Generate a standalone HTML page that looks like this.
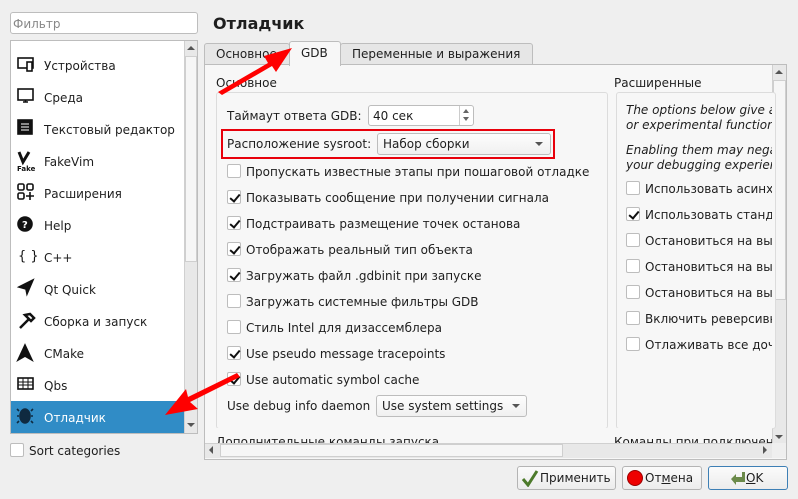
<!DOCTYPE html>
<html><head><meta charset="utf-8"><style>
*{box-sizing:border-box;margin:0;padding:0}
body{width:798px;height:499px;background:#efefef;font-family:"DejaVu Sans","Liberation Sans",sans-serif;font-size:12px;color:#1e1e1e;position:relative;overflow:hidden}
.a{position:absolute}
.t{position:absolute;white-space:nowrap;line-height:16px;margin-top:1px}
.cb{position:absolute;width:14px;height:14px;border:1px solid #bdbdbd;background:#fff;border-radius:2px}
.cb.c::after{content:"";position:absolute;left:4px;top:1px;width:4px;height:8px;border:solid #111;border-width:0 2px 2px 0;transform:rotate(40deg)}
.btn{position:absolute;border:1px solid #b4b4b4;border-radius:3px;background:linear-gradient(#fbfbfb,#ececec)}
.combo{position:absolute;border:1px solid #bdbdbd;border-radius:3px;background:linear-gradient(#fdfdfd,#f0f0f0)}
.dd{position:absolute;width:0;height:0;border-left:4px solid transparent;border-right:4px solid transparent;border-top:4px solid #555}
</style></head><body>
<!-- filter -->
<div class="a" style="left:10px;top:12px;width:188px;height:22px;background:#fff;border:1px solid #bdbdbd;border-radius:3px"></div>
<div class="t" style="left:13px;top:15px;color:#888">Фильтр</div>
<!-- list -->
<div class="a" style="left:10px;top:40px;width:188px;height:394px;background:#fff;border:1px solid #bdbdbd"></div>
<div class="a" style="left:184px;top:41px;width:13px;height:392px;background:#e8e8e8;border-left:1px solid #d0d0d0"></div>
<div class="a" style="left:185px;top:56px;width:12px;height:206px;background:#f6f6f6;border:1px solid #cfcfcf"></div>
<div class="a" style="left:187px;top:46px;border-left:4px solid transparent;border-right:4px solid transparent;border-bottom:4px solid #555"></div>
<div class="dd" style="left:187px;top:423px"></div>
<div class="a" style="left:11px;top:401px;width:173px;height:32px;background:#308cc6"></div>
<!-- icons -->
<svg class="a" style="left:16px;top:54px" width="22" height="380" viewBox="0 0 22 380" fill="none" stroke="#111" stroke-width="1.6">
<rect x="2" y="4" width="15" height="10"/><rect x="11" y="8" width="5" height="9" fill="#fff"/>
<rect x="2" y="35" width="15" height="11"/><path d="M7 48h5M9.5 46v2"/>
<rect x="2" y="66" width="14" height="14" fill="#111"/><path d="M5 70h8M5 73h8M5 76h8" stroke="#fff" stroke-width="1"/>
<path d="M3 98l4 10 6-10" stroke-width="3"/><text x="1" y="117" font-size="7" fill="#111" stroke="none" font-weight="bold">Fake</text>
<rect x="2" y="130" width="6" height="6" rx="1.5"/><rect x="11" y="130" width="6" height="6" rx="1.5"/><rect x="2" y="139" width="6" height="6" rx="1.5"/><path d="M14 138v8M10 142h8"/>
<circle cx="9" cy="170" r="7" fill="#111"/><text x="6" y="174" font-size="10" font-weight="bold" fill="#fff" stroke="none">?</text>
<text x="2" y="206" font-size="13" fill="#111" stroke="none">{ }</text>
<path d="M3 233l14-7-6 14-1-5z" fill="#111"/>
<path d="M4 274l9-9M9 261l5-1 4 4-3 3z" stroke-width="2.5"/>
<path d="M9 291l-7 15 7-4 7 4z" fill="#111"/>
<rect x="2" y="324" width="15" height="11"/><path d="M2 328h15M2 331h15M7 324v11M12 324v11" stroke-width="1"/>
<ellipse cx="9" cy="362" rx="5" ry="7" fill="#0f2a40" stroke="#0f2a40"/><path d="M3 357l-2-2M15 357l2-2M3 362h-2M15 362h2M3 367l-2 2M15 367l2 2" stroke="#0f2a40"/>
</svg>
<div class="t" style="left:44px;top:57px">Устройства</div>
<div class="t" style="left:44px;top:89px">Среда</div>
<div class="t" style="left:44px;top:121px">Текстовый редактор</div>
<div class="t" style="left:44px;top:153px">FakeVim</div>
<div class="t" style="left:44px;top:185px">Расширения</div>
<div class="t" style="left:44px;top:217px">Help</div>
<div class="t" style="left:44px;top:249px">C++</div>
<div class="t" style="left:44px;top:281px">Qt Quick</div>
<div class="t" style="left:44px;top:313px">Сборка и запуск</div>
<div class="t" style="left:44px;top:345px">CMake</div>
<div class="t" style="left:44px;top:377px">Qbs</div>
<div class="t" style="left:44px;top:409px;color:#fff">Отладчик</div>
<div class="cb" style="left:10px;top:443px"></div>
<div class="t" style="left:29px;top:442px">Sort categories</div>
<!-- title -->
<div class="t" style="left:213px;top:13px;font-size:16px;font-weight:bold;line-height:20px">Отладчик</div>
<!-- tabs -->
<div class="a" style="left:204px;top:64px;width:583px;height:396px;border:1px solid #bdbdbd;background:#f7f7f7"></div>
<div class="a" style="left:204px;top:43px;width:86px;height:22px;border:1px solid #bdbdbd;background:#e6e6e6;border-radius:3px 3px 0 0"></div>
<div class="t" style="left:216px;top:45px">Основное</div>
<div class="a" style="left:340px;top:43px;width:193px;height:22px;border:1px solid #bdbdbd;background:#e6e6e6;border-radius:3px 3px 0 0"></div>
<div class="t" style="left:352px;top:45px">Переменные и выражения</div>
<div class="a" style="left:289px;top:41px;width:52px;height:25px;border:1px solid #bdbdbd;border-bottom:none;background:#f7f7f7;border-radius:3px 3px 0 0"></div>
<div class="t" style="left:301px;top:44px">GDB</div>
<!-- scrollbars -->
<div class="a" style="left:772px;top:65px;width:14px;height:378px;background:#e8e8e8;border-left:1px solid #d0d0d0"></div>
<div class="a" style="left:773px;top:80px;width:13px;height:220px;background:#f6f6f6;border:1px solid #cfcfcf"></div>
<div class="a" style="left:775px;top:70px;border-left:4px solid transparent;border-right:4px solid transparent;border-bottom:4px solid #555"></div>
<div class="dd" style="left:775px;top:435px"></div>
<div class="a" style="left:205px;top:443px;width:567px;height:15px;background:#e8e8e8;border-top:1px solid #d0d0d0"></div>
<div class="a" style="left:220px;top:444px;width:343px;height:13px;background:#f6f6f6;border:1px solid #cfcfcf"></div>
<div class="a" style="left:209px;top:446px;border-top:4px solid transparent;border-bottom:4px solid transparent;border-right:4px solid #555"></div>
<div class="a" style="left:763px;top:446px;border-top:4px solid transparent;border-bottom:4px solid transparent;border-left:4px solid #555"></div>
<!-- groups -->
<div class="t" style="left:216px;top:74px">Основное</div>
<div class="a" style="left:216px;top:92px;width:392px;height:337px;border:1px solid #dcdcdc;border-radius:3px;background:#f7f7f7"></div>
<div class="t" style="left:614px;top:74px">Расширенные</div>
<div class="a" style="left:616px;top:92px;width:160px;height:337px;border:1px solid #dcdcdc;border-radius:3px;background:#f7f7f7"></div>
<div class="a" style="left:205px;top:428px;width:567px;height:15px;background:#f7f7f7;overflow:hidden">
<div class="t" style="left:11px;top:5px">Дополнительные команды запуска</div>
<div class="t" style="left:409px;top:5px">Команды при подключении</div></div>
<div class="a" style="left:772px;top:443px;width:14px;height:15px;background:#efefef"></div>
<!-- left group -->
<div class="t" style="left:227px;top:107px">Таймаут ответа GDB:</div>
<div class="a" style="left:368px;top:105px;width:106px;height:21px;border:1px solid #bdbdbd;border-radius:3px;background:#fff"></div>
<div class="a" style="left:459px;top:106px;width:1px;height:19px;background:#ccc"></div>
<div class="a" style="left:463px;top:109px;border-left:3px solid transparent;border-right:3px solid transparent;border-bottom:4px solid #666"></div>
<div class="a" style="left:463px;top:117px;border-left:3px solid transparent;border-right:3px solid transparent;border-top:4px solid #666"></div>
<div class="t" style="left:373px;top:107px">40 сек</div>
<div class="a" style="left:221px;top:129px;width:334px;height:30px;border:2px solid #e8000b"></div>
<div class="t" style="left:227px;top:135px">Расположение sysroot:</div>
<div class="combo" style="left:377px;top:133px;width:174px;height:22px"></div>
<div class="t" style="left:383px;top:135px">Набор сборки</div>
<div class="dd" style="left:535px;top:142px"></div>
<div class="cb" style="left:227px;top:164px"></div><div class="t" style="left:246px;top:163px">Пропускать известные этапы при пошаговой отладке</div>
<div class="cb c" style="left:227px;top:190px"></div><div class="t" style="left:246px;top:189px">Показывать сообщение при получении сигнала</div>
<div class="cb c" style="left:227px;top:216px"></div><div class="t" style="left:246px;top:215px">Подстраивать размещение точек останова</div>
<div class="cb c" style="left:227px;top:242px"></div><div class="t" style="left:246px;top:241px">Отображать реальный тип объекта</div>
<div class="cb c" style="left:227px;top:268px"></div><div class="t" style="left:246px;top:267px">Загружать файл .gdbinit при запуске</div>
<div class="cb" style="left:227px;top:294px"></div><div class="t" style="left:246px;top:293px">Загружать системные фильтры GDB</div>
<div class="cb" style="left:227px;top:320px"></div><div class="t" style="left:246px;top:319px">Стиль Intel для дизассемблера</div>
<div class="cb c" style="left:227px;top:346px"></div><div class="t" style="left:246px;top:345px">Use pseudo message tracepoints</div>
<div class="cb c" style="left:227px;top:372px"></div><div class="t" style="left:246px;top:371px">Use automatic symbol cache</div>
<div class="t" style="left:227px;top:397px">Use debug info daemon</div>
<div class="combo" style="left:376px;top:395px;width:151px;height:22px"></div>
<div class="t" style="left:382px;top:397px">Use system settings</div>
<div class="dd" style="left:512px;top:404px"></div>
<!-- right group -->
<div class="a" style="left:617px;top:93px;width:155px;height:335px;overflow:hidden">
<div class="t" style="left:9px;top:9px;font-style:italic;line-height:15px">The options below give access to advanced<br>or experimental functions</div>
<div class="t" style="left:9px;top:49px;font-style:italic;line-height:15px">Enabling them may negatively impact<br>your debugging experience</div>
<div class="cb" style="left:9px;top:88px"></div><div class="t" style="left:28px;top:87px">Использовать асинхронный режим</div>
<div class="cb c" style="left:9px;top:114px"></div><div class="t" style="left:28px;top:113px">Использовать стандартные</div>
<div class="cb" style="left:9px;top:140px"></div><div class="t" style="left:28px;top:139px">Остановиться на выходе</div>
<div class="cb" style="left:9px;top:166px"></div><div class="t" style="left:28px;top:165px">Остановиться на выходе</div>
<div class="cb" style="left:9px;top:192px"></div><div class="t" style="left:28px;top:191px">Остановиться на выходе</div>
<div class="cb" style="left:9px;top:218px"></div><div class="t" style="left:28px;top:217px">Включить реверсивную</div>
<div class="cb" style="left:9px;top:244px"></div><div class="t" style="left:28px;top:243px">Отлаживать все дочерние</div>
</div>
<!-- buttons -->
<div class="btn" style="left:517px;top:466px;width:99px;height:24px"></div>
<svg class="a" style="left:521px;top:469px" width="18" height="18"><path d="M2 10l5 6L16 2" stroke="#4c7a2a" stroke-width="3" fill="none"/></svg>
<div class="t" style="left:540px;top:469px">Применить</div>
<div class="btn" style="left:622px;top:466px;width:80px;height:24px"></div>
<div class="a" style="left:627px;top:470px;width:16px;height:16px;border-radius:50%;background:#e00;border:1px solid #900"></div>
<div class="t" style="left:645px;top:469px">От<u>м</u>ена</div>
<div class="btn" style="left:708px;top:466px;width:80px;height:24px;border-color:#3d7fb5"></div>
<svg class="a" style="left:728px;top:469px" width="18" height="18"><path d="M3 10l5-5v3h6V3h3v10H8v3z" fill="#6b8a4a"/></svg>
<div class="t" style="left:746px;top:469px"><u>O</u>K</div>
<!-- arrows -->
<svg class="a" style="left:0;top:0" width="798" height="499">
<path d="M218 92L268 63 264 56 292 48 276 72 272 66 222 95z" fill="#f00"/>
<path d="M240 377L190 402 198 409 165 415 186 389 188 397 237 373z" fill="#f00"/>
</svg>
</body></html>
